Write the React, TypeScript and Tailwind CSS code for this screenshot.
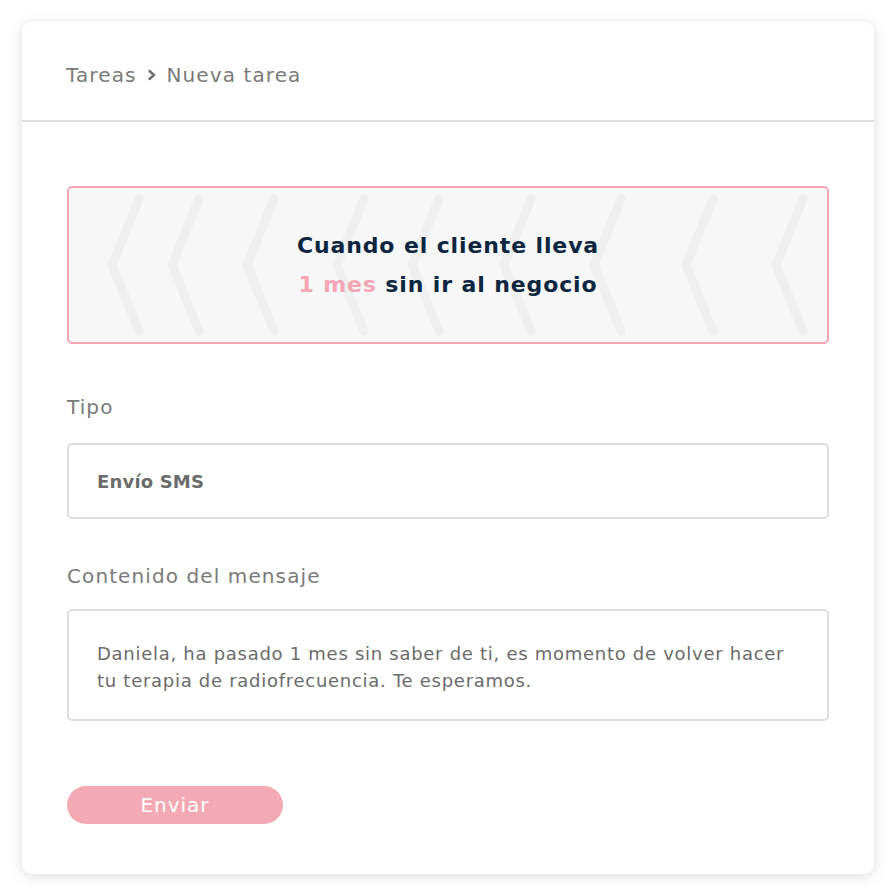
import React from "react";

const chevronXs = [108, 168, 243, 333, 408, 500, 590, 682, 772];

function Chevrons() {
  return (
    <svg
      className="absolute inset-0 pointer-events-none"
      width="762"
      height="158"
      viewBox="0 0 762 158"
    >
      {chevronXs.map((x, i) => {
        const lx = x - 69 + 4;
        return (
          <polyline
            key={i}
            points={`${lx + 27},${11} ${lx},${77} ${lx + 27},${143}`}
            fill="none"
            stroke="#efefef"
            strokeWidth="9"
            strokeLinecap="round"
            strokeLinejoin="round"
          />
        );
      })}
    </svg>
  );
}

export default function App() {
  return (
    <div
      className="bg-white p-[22px] w-[896px] h-[896px]"
      style={{ fontFamily: '"DejaVu Sans", sans-serif' }}
    >
      <div className="bg-white rounded-[10px] shadow-[0_2px_14px_rgba(0,0,0,0.14)] h-[852px] flex flex-col">
        <div className="h-[98px] flex items-center pl-[44px] pt-[8px] gap-[9px] text-[20px] tracking-[0.055em] text-[#7a7a7a]">
          <span>Tareas</span>
          <svg width="12" height="12" viewBox="0 0 12 12">
            <polyline
              points="3.5,2 8,6 3.5,10"
              fill="none"
              stroke="#6f6f6f"
              strokeWidth="2.4"
              strokeLinecap="round"
              strokeLinejoin="round"
            />
          </svg>
          <span>Nueva tarea</span>
        </div>
        <div className="h-[2px] bg-[#e0e0e0]" />
        <div className="px-[45px] pt-[64px] flex flex-col">
          <div className="relative h-[158px] rounded-[5px] border-2 border-[#f4a6b4] bg-[#f7f7f7] overflow-hidden flex items-center justify-center">
            <Chevrons />
            <div className="relative text-center text-[22px] leading-[39px] font-semibold tracking-[0.04em] text-[#0c2640]">
              <div>Cuando el cliente lleva</div>
              <div>
                <span className="text-[#f4a6b4]">1 mes</span> sin ir al negocio
              </div>
            </div>
          </div>
          <div className="mt-[49px] text-[20px] text-[#7a7a7a] tracking-[0.055em] leading-[28px]">
            Tipo
          </div>
          <div className="mt-[22px] h-[76px] rounded-[5px] border-2 border-[#dedede] flex items-center px-[28px] text-[18px] font-semibold tracking-[0.01em] text-[#6b6b6b]">
            Envío SMS
          </div>
          <div className="mt-[43px] text-[20px] text-[#7a7a7a] tracking-[0.055em] leading-[28px]">
            Contenido del mensaje
          </div>
          <div className="mt-[19px] h-[112px] rounded-[5px] border-2 border-[#dedede] px-[28px] pt-[29px] text-[18px] leading-[27px] tracking-[0.04em] text-[#6b6b6b]">
            Daniela, ha pasado 1 mes sin saber de ti, es momento de volver hacer tu terapia de
            radiofrecuencia. Te esperamos.
          </div>
          <button className="mt-[65px] w-[216px] h-[38px] rounded-full bg-[#f4aab5] text-white text-[20px] tracking-[0.05em] leading-none">
            Enviar
          </button>
        </div>
      </div>
    </div>
  );
}
